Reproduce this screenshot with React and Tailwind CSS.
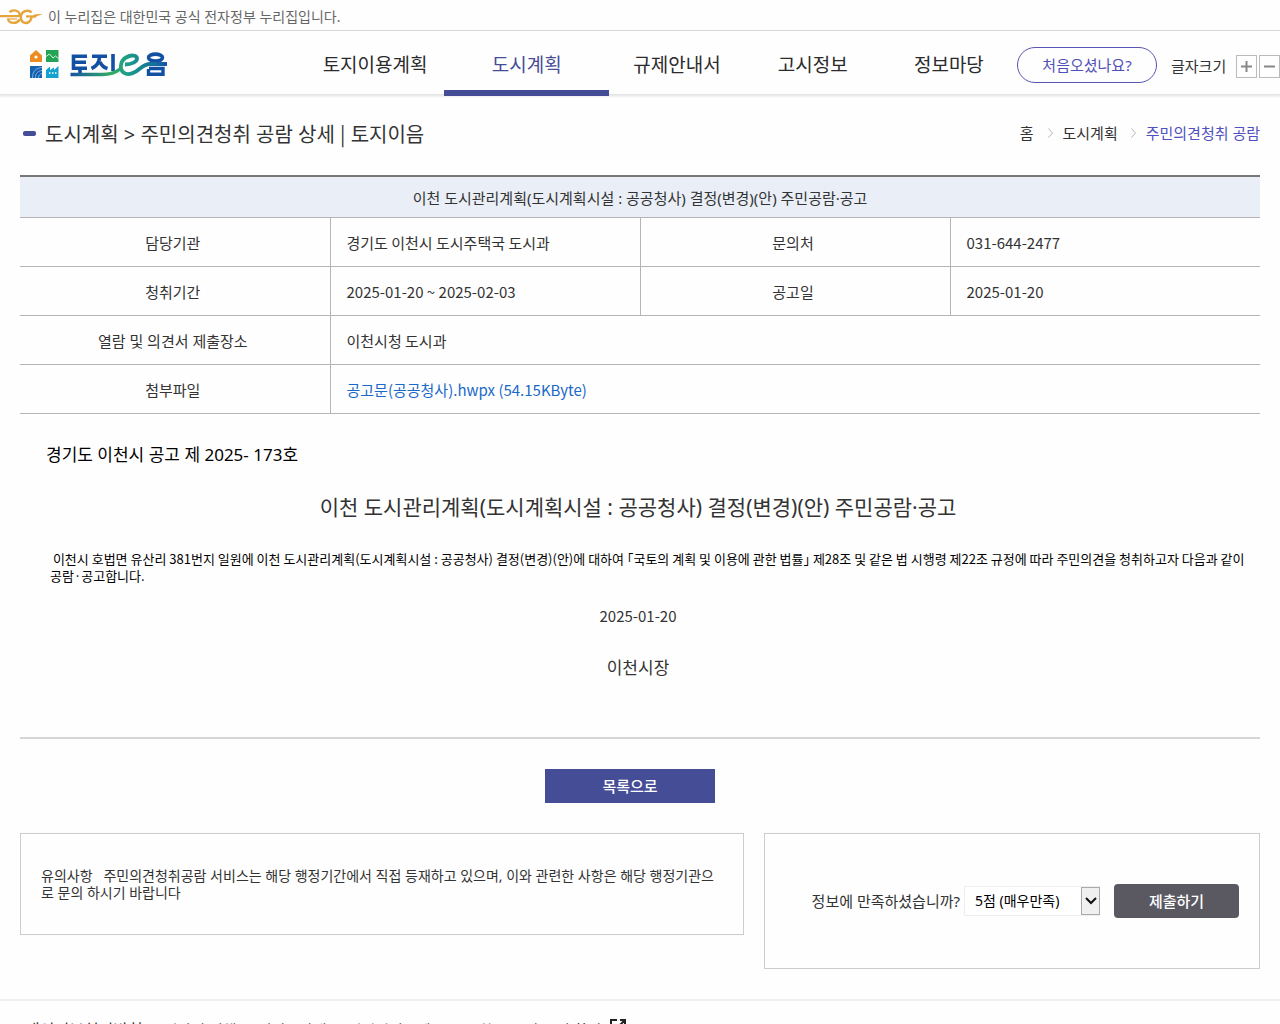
const menu = [
  { label: '토지이용계획' },
  { label: '도시계획', active: true },
  { label: '규제안내서' },
  { label: '고시정보' },
  { label: '정보마당' },
];

const footerLinks = ['개인정보처리방침', '저작권 정책', '서비스안내', '이미지정보제공', '통합오류 신고 및 확인'];

function GovMark() {
  return (
    <svg width="43" height="18" viewBox="0 0 43 18" fill="none" stroke="#e5a53a" aria-hidden="true">
      <path d="M0 8.200H17.500C20 8.200 20.400 6 18.500 4C16 1.800 11.500 2 9.500 4.200" strokeWidth="2.300" />
      <path d="M8 11C8.500 13.500 10.500 14.900 13.500 14.900C16.500 14.900 18.500 13.500 19.800 11.500" strokeWidth="2.300" />
      <path d="M31.500 4.500C29.500 2.200 25.500 2.200 23 4.200C20 6.700 20 11.500 22.500 13.700C25.500 16 31 15 31.500 9" strokeWidth="2.500" />
      <path d="M26 8.400H36" strokeWidth="2.200" />
      <path d="M34 6.600L43 5.800L33 10Z" fill="#e5a53a" stroke="none" />
      <path d="M7 11H17" strokeWidth="1.200" />
    </svg>
  );
}

function Logo() {
  return (
    <svg width="138" height="32" viewBox="0 0 138 32" role="img" aria-label="토지이음">
      <path d="M0 6.500L6 1L12 6.500V13H0Z" fill="#ee8c24" />
      <circle cx="6" cy="8" r="1.600" fill="#fff" />
      <rect x="16" y="1" width="12.500" height="12" fill="#23a455" />
      <path d="M16 7.500L19.500 5L23 9L25.500 7L28.500 9.500" stroke="#d9f3dc" strokeWidth="1" fill="none" />
      <rect x="0" y="17" width="12" height="12" fill="#1760ad" />
      <path d="M2.500 29C2.500 22 6 19 12 18.500M5.500 29C5.500 24 8 22 12 21.500M8.500 29C8.500 26.500 10 25 12 24.500" stroke="#73b8e4" strokeWidth="1" fill="none" />
      <path d="M16 29V21L20 17.500V21L24 18.500V21L28.500 17V29Z" fill="#16a2cf" />
      <path d="M19 24H20.500M22 24H23.500M25 24H26.500" stroke="#fff" strokeWidth="1.500" />
      <defs>
        <linearGradient id="swoosh" x1="40" y1="0" x2="138" y2="0" gradientUnits="userSpaceOnUse">
          <stop offset="0" stopColor="#1454a4" />
          <stop offset="0.420" stopColor="#35ac62" />
          <stop offset="0.600" stopColor="#1b9b8c" />
          <stop offset="1" stopColor="#1454a4" />
        </linearGradient>
      </defs>
      <g stroke="#1250a3" strokeWidth="3.600" fill="none">
        <path d="M57 7.200H43.500V19.200H57M43.500 13.200H56M50 19V25" />
        <path d="M62 7.200H77M69.500 7.500C69.500 13 67 17 61.500 19.500M70 13C71.500 16.500 74 18.500 77.500 19.500M83 5V22" />
        <ellipse cx="125.500" cy="8.600" rx="7" ry="3.500" />
        <path d="M118.500 20V25.200H133V19.500H119" strokeWidth="3.400" />
      </g>
      <path d="M40.500 25.500H72C80 25.500 86 23.500 90 20" fill="none" stroke="url(#swoosh)" strokeWidth="3.400" />
      <path d="M95 15.500C102 15.500 107 12.500 107 9.500C107 6 101 5.500 96 8.500C89.500 12.500 89.500 21 94 23.800C98.500 27 105.500 23.500 110 19.500C114 16.300 116 15 120 15H137" fill="none" stroke="url(#swoosh)" strokeWidth="3.800" />
    </svg>
  );
}

function Chevron() {
  return (
    <svg width="7" height="12" viewBox="0 0 7 12" fill="none" stroke="#b5b5b5" aria-hidden="true">
      <path d="M1.500 1.500L5.500 6L1.500 10.500" />
    </svg>
  );
}

function Label({ children }) {
  return <th scope="row" className="h-[49px] border-b border-[#b5b5b5] pt-[2px] pr-1 text-center font-normal">{children}</th>;
}

function Value({ children, span = 1, divided = false }) {
  return (
    <td colSpan={span} className={`h-[49px] border-b border-l border-[#b5b5b5] px-4 pt-[3px] font-['Noto_Sans_CJK_KR',sans-serif] ${divided ? 'border-r' : ''}`}>
      {children}
    </td>
  );
}

export default function App() {
  return (
    <div className="h-screen overflow-hidden bg-[#fefefe] font-['Noto_Sans','Noto_Sans_CJK_KR',sans-serif] text-[15px] leading-6 text-[#333]">
      <div className="flex h-[31px] items-center gap-[5px] border-b border-[#ddd] pt-1 text-sm text-[#666]">
        <GovMark />
        <span>이 누리집은 대한민국 공식 전자정부 누리집입니다.</span>
      </div>

      <header className="flex h-16 border-b border-[#e4e4e4] shadow-[0_1px_3px_rgba(0,0,0,0.12)]">
        <a href="#home" className="w-[306px] shrink-0 pt-[18px] pl-[30px]"><Logo /></a>
        <nav className="grid flex-1 grid-cols-[138fr_165fr_135fr_136fr_136fr]">
          {menu.map((m) => (
            <a
              key={m.label}
              href="#menu"
              className={`-mb-[2px] whitespace-nowrap pt-[22px] text-center text-[19px] ${m.active ? 'border-b-6 border-[#464d97] text-[#464d97]' : 'text-[#2b2b2b]'}`}
            >
              {m.label}
            </a>
          ))}
        </nav>
        <div className="flex w-[263px] shrink-0 items-center pt-2 whitespace-nowrap">
          <button className="mb-1 h-9 w-[140px] shrink-0 rounded-full border border-[#5855b5] text-[#5050b8]">처음오셨나요?</button>
          <span className="mb-[2px] ml-[14px]">글자크기</span>
          <button aria-label="글자 크게" className="ml-[10px] flex h-[23px] w-[21px] shrink-0 items-center justify-center border border-[#bbb]">
            <svg width="11" height="11" viewBox="0 0 11 11" stroke="#888" strokeWidth="2"><path d="M0 5.500H11M5.500 0V11" /></svg>
          </button>
          <button aria-label="글자 작게" className="ml-[2px] flex h-[23px] w-[21px] shrink-0 items-center justify-center border border-[#bbb]">
            <svg width="11" height="11" viewBox="0 0 11 11" stroke="#888" strokeWidth="2"><path d="M0 5.500H11" /></svg>
          </button>
        </div>
      </header>

      <main className="px-5">
        <div className="flex h-20 items-center justify-between pb-1">
          <h1 className="flex items-center text-xl">
            <span className="mr-[9px] ml-[3px] h-[5px] w-[13px] rounded-xs bg-[#464d97]" />
            <span className="pt-[3px]">도시계획 &gt; 주민의견청취 공람 상세 <span className="font-['Noto_Sans_CJK_KR',sans-serif]">|</span> 토지이음</span>
          </h1>
          <nav className="flex items-center">
            <a href="#home" className="mr-[14px]">홈</a>
            <Chevron />
            <a href="#plan" className="mr-3 ml-2">도시계획</a>
            <Chevron />
            <a href="#notice" className="ml-[9px] text-[#5050c0]">주민의견청취 공람</a>
          </nav>
        </div>

        <table className="w-full table-fixed border-collapse border-t-2 border-[#777]">
          <thead>
            <tr>
              <th colSpan={4} className="h-[41px] border-b border-[#b5b5b5] bg-[#e9eef7] pt-[2px] font-normal">
                이천 도시관리계획(도시계획시설 : 공공청사) 결정(변경)(안) 주민공람·공고
              </th>
            </tr>
          </thead>
          <tbody>
            <tr>
              <Label>담당기관</Label>
              <Value divided>경기도 이천시 도시주택국 도시과</Value>
              <Label>문의처</Label>
              <Value>031-644-2477</Value>
            </tr>
            <tr>
              <Label>청취기간</Label>
              <Value divided>2025-01-20 ~ 2025-02-03</Value>
              <Label>공고일</Label>
              <Value>2025-01-20</Value>
            </tr>
            <tr>
              <Label>열람 및 의견서 제출장소</Label>
              <Value span={3}>이천시청 도시과</Value>
            </tr>
            <tr>
              <Label>첨부파일</Label>
              <Value span={3}><a href="#file" className="text-[#1a69c8]">공고문(공공청사).hwpx (54.15KByte)</a></Value>
            </tr>
          </tbody>
        </table>

        <article className="border-b-2 border-[#d5d5d5] pt-[29px] pr-[30px] pb-[57px] pl-[26px]">
          <p className="text-[17px] text-black">경기도 이천시 공고 제 2025- 173호</p>
          <h2 className="mt-6 text-center text-[21px] leading-8">이천 도시관리계획(도시계획시설 : 공공청사) 결정(변경)(안) 주민공람·공고</h2>
          <p className="mt-[27px] -mr-7 ml-1 font-['Noto_Sans_CJK_KR',sans-serif] text-[13px] leading-[17px] text-black [font-feature-settings:'halt']">
            &nbsp;이천시 호법면 유산리 381번지 일원에 이천 도시관리계획(도시계획시설 : 공공청사) 결정(변경)(안)에 대하여 「국토의 계획 및 이용에 관한 법률」 제28조 및 같은 법 시행령 제22조 규정에 따라 주민의견을 청취하고자 다음과 같이<br />공람·공고합니다.
          </p>
          <p className="mt-5 text-center font-['Noto_Sans_CJK_KR',sans-serif]">2025-01-20</p>
          <p className="mt-7 text-center text-[17px]">이천시장</p>
        </article>

        <div className="mt-[30px] flex justify-center pr-5">
          <button className="h-[34px] w-[170px] bg-[#464d97] font-medium text-white">목록으로</button>
        </div>

        <div className="mt-[30px] grid grid-cols-[724fr_496fr] items-start gap-5">
          <p className="min-h-[102px] border border-[#ccc] px-5 py-[33px] text-sm leading-[17px] break-all">
            유의사항 &nbsp; 주민의견청취공람 서비스는 해당 행정기간에서 직접 등재하고 있으며, 이와 관련한 사항은 해당 행정기관으로 문의 하시기 바랍니다
          </p>
          <form className="flex h-[136px] items-center justify-end border border-[#ccc] pr-5">
            <label htmlFor="score">정보에 만족하셨습니까?</label>
            <span className="relative mr-[14px] ml-1 flex">
              <select id="score" className="h-[30px] w-[136px] appearance-none border border-[#eee] bg-white pl-[10px] text-sm text-black">
                <option>5점 (매우만족)</option>
              </select>
              <span className="pointer-events-none absolute top-px right-0 flex h-7 w-[19px] items-center justify-center border border-[#aaa] bg-[#f0f0f0]">
                <svg width="12" height="8" viewBox="0 0 12 8" fill="none" stroke="#111" strokeWidth="2"><path d="M1 1L6 6L11 1" /></svg>
              </span>
            </span>
            <button type="button" className="h-[34px] w-[125px] rounded bg-[#5a5962] font-medium text-white">제출하기</button>
          </form>
        </div>
      </main>

      <footer className="mt-[30px] border-t-2 border-[#f0f0f0] px-[25px] pt-[17px]">
        <ul className="flex items-start">
          {footerLinks.map((t, i) => (
            <li key={t} className="flex items-center">
              {i > 0 && <span className="mx-[10px] h-3 w-px bg-[#aaa]" />}
              <a href="#policy" className={i === 0 ? 'text-base' : ''}>{t}</a>
            </li>
          ))}
          <li className="ml-2">
            <svg width="18" height="18" viewBox="0 0 18 18" fill="none" stroke="#222" strokeWidth="2" aria-hidden="true">
              <path d="M8 2H2V16H16V10M11 2H16V7M16 2L8 10" />
            </svg>
          </li>
        </ul>
      </footer>
    </div>
  );
}
